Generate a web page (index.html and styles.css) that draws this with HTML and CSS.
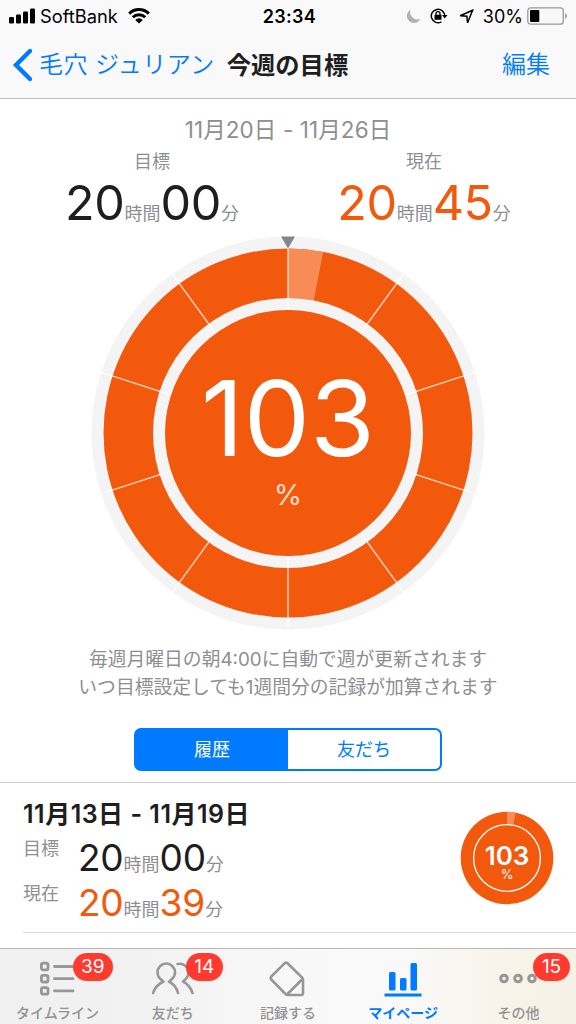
FILE: index.html
```html
<!DOCTYPE html>
<html lang="ja">
<head>
    <meta charset="UTF-8">
    <meta name="viewport" content="width=device-width, initial-scale=1.0">
    <title>今週の目標</title>
    <link rel="stylesheet" href="styles.css">
</head>
<body>
    <header class="header">
        <div class="status-bar">
            <div class="status-left">
                <svg class="signal" width="26" height="16" viewBox="0 0 26 16">
                    <rect x="0" y="9" width="5" height="6.5" rx="1.3"/>
                    <rect x="7" y="6.5" width="5" height="9" rx="1.3"/>
                    <rect x="14" y="3.5" width="5" height="12" rx="1.3"/>
                    <rect x="21" y="0.5" width="5" height="15" rx="1.3"/>
                </svg>
                <span class="carrier">SoftBank</span>
                <svg class="wifi" width="22" height="16" viewBox="0 0 22 16">
                    <path d="M1.2 5.6a14 14 0 0 1 19.6 0M4.8 9.2a8.8 8.8 0 0 1 12.4 0" fill="none" stroke="#000" stroke-width="3"/>
                    <path d="M11 15.6L7.2 11.9a5.4 5.4 0 0 1 7.6 0z"/>
                </svg>
            </div>
            <span class="clock">23:34</span>
            <div class="status-right">
                <svg class="moon" width="15" height="15" viewBox="0 0 15 15">
                    <path d="M4.6 0.8A7 7 0 1 0 14.3 9.8A7.2 7.2 0 0 1 4.6 0.8z" fill="#b2b2b2"/>
                </svg>
                <svg class="lock" width="18" height="16" viewBox="0 0 18 16">
                    <path d="M14.7 8A6.7 6.7 0 1 0 11.4 13.8" fill="none" stroke="#000" stroke-width="1.5"/>
                    <path d="M12 7h5.5l-2.8 3.4z"/>
                    <rect x="4.5" y="6.8" width="7" height="5" rx="0.6"/>
                    <path d="M6 7.4V5.6a2 2 0 0 1 4 0V7.4" fill="none" stroke="#000" stroke-width="1.3"/>
                </svg>
                <svg class="arrow" width="15" height="15" viewBox="0 0 15 15">
                    <path d="M1.2 6.8L13.6 1.2L8.6 13.8L7.9 7.3z" fill="none" stroke="#000" stroke-width="1.5"/>
                </svg>
                <span class="battery-text">30%</span>
                <svg class="battery" width="41" height="18" viewBox="0 0 41 18">
                    <rect x="0.8" y="0.8" width="35.5" height="16.4" rx="3" fill="none" stroke="#999" stroke-width="1.3"/>
                    <rect x="3" y="3" width="9.3" height="12" rx="1"/>
                    <path d="M38.2 6v6a3.4 3.4 0 0 0 0-6z" fill="#999"/>
                </svg>
            </div>
        </div>
        <nav class="nav-bar">
            <a class="back">
                <svg width="20" height="34" viewBox="0 0 20 34">
                    <path d="M18 3L4 17L18 31" fill="none" stroke="#007aff" stroke-width="4.4" stroke-linecap="round"/>
                </svg>
                <span>毛穴 ジュリアン</span>
            </a>
            <h1 class="nav-title">今週の目標</h1>
            <a class="edit">編集</a>
        </nav>
    </header>

    <main class="main">
        <p class="period">11月20日 - 11月26日</p>
        <div class="goals">
            <div class="goal">
                <p class="goal-label">目標</p>
                <p class="time"><b>20</b>時間<b>00</b>分</p>
            </div>
            <div class="goal">
                <p class="goal-label">現在</p>
                <p class="time current"><b>20</b>時間<b>45</b>分</p>
            </div>
        </div>

        <div class="chart">
            <svg width="394" height="394" viewBox="-197 -197 394 394">
                <circle r="196.5" fill="#f4f4f4"/>
                <circle r="184.5" fill="#f2590d"/>
                <path d="M0 -184.5A184.5 184.5 0 0 1 35.2 -181.1L25.7 -132.5A135 135 0 0 0 0 -135z" fill="#f78c56"/>
                <circle r="135" fill="#f4f4f4"/>
                <g class="ticks">
                    <path d="M0 -185V-123"/>
                    <path d="M0 -197V-123" transform="rotate(36)"/>
                    <path d="M0 -197V-123" transform="rotate(72)"/>
                    <path d="M0 -197V-123" transform="rotate(108)"/>
                    <path d="M0 -197V-123" transform="rotate(144)"/>
                    <path d="M0 -197V-123" transform="rotate(180)"/>
                    <path d="M0 -197V-123" transform="rotate(216)"/>
                    <path d="M0 -197V-123" transform="rotate(252)"/>
                    <path d="M0 -197V-123" transform="rotate(288)"/>
                    <path d="M0 -197V-123" transform="rotate(324)"/>
                </g>
                <circle r="123" fill="#f2590d"/>
                <path d="M-7 -196.5H7L0 -184.5z" fill="#808790"/>
                <text class="chart-value" x="0" y="22.5">103</text>
                <text class="chart-unit" x="0" y="72">%</text>
            </svg>
        </div>

        <p class="note">毎週月曜日の朝4:00に自動で週が更新されます<br>いつ目標設定しても1週間分の記録が加算されます</p>

        <div class="segment">
            <span class="segment-item active">履歴</span>
            <span class="segment-item">友だち</span>
        </div>

        <section class="history">
            <div class="record">
                <div class="record-info">
                    <h2 class="record-title">11月13日 - 11月19日</h2>
                    <div class="record-row">
                        <span class="record-label">目標</span>
                        <p class="time small"><b>20</b>時間<b>00</b>分</p>
                    </div>
                    <div class="record-row">
                        <span class="record-label">現在</span>
                        <p class="time small current"><b>20</b>時間<b>39</b>分</p>
                    </div>
                </div>
                <svg class="record-chart" width="94" height="94" viewBox="-47 -47 94 94">
                    <circle r="46.3" fill="#f2590d"/>
                    <path d="M0 -46.3A46.3 46.3 0 0 1 8.7 -45.4L6.4 -33.4H0z" fill="#f78c56"/>
                    <circle r="33.4" fill="#f2590d" stroke="#fff" stroke-width="1.4"/>
                    <text class="record-value" x="0" y="6.5">103</text>
                    <text class="record-unit" x="0" y="21">%</text>
                </svg>
            </div>
        </section>
    </main>

    <footer class="tab-bar">
        <a class="tab">
            <span class="tab-icon">
                <svg width="38" height="36" viewBox="0 0 38 36">
                    <g fill="none" stroke="#979797" stroke-width="2.8">
                        <rect x="2.4" y="2.2" width="6.6" height="6.6" rx="1.8"/>
                        <rect x="2.4" y="14.4" width="6.6" height="6.6" rx="1.8"/>
                        <rect x="2.4" y="26.6" width="6.6" height="6.6" rx="1.8"/>
                        <path d="M15.5 5.5H34M15.5 17.7H34M15.5 29.9H34" stroke-linecap="round"/>
                    </g>
                </svg>
                <span class="badge">39</span>
            </span>
            <span class="tab-label">タイムライン</span>
        </a>
        <a class="tab">
            <span class="tab-icon">
                <svg width="42" height="36" viewBox="0 0 42 36">
                    <g fill="none" stroke="#979797" stroke-width="2.6" stroke-linecap="round" stroke-linejoin="round">
                        <path d="M1 32C3 26 6 23 11.5 20.5C7 17.5 5.5 14.5 5.5 11.5C5.5 6.5 9.5 2.5 14.2 2.5S23 6.5 23 11.5C23 14.5 21.5 17.5 17 20.5C22 23 24.5 26 26 32"/>
                        <path d="M25.5 3C31.5 1.5 36.5 6.5 36.5 11.5C36.5 14.5 35 17.5 31 20.5C36 23 38.5 26 40.5 32"/>
                    </g>
                </svg>
                <span class="badge">14</span>
            </span>
            <span class="tab-label">友だち</span>
        </a>
        <a class="tab">
            <span class="tab-icon">
                <svg width="38" height="36" viewBox="0 0 38 36">
                    <path d="M15.5 2.3L2.3 15.5Q1 17 2.3 18.5L16.5 33Q17.5 34 19 34H32Q34 34 34 32V18.5Q34 17.5 33 16.5L18.5 2.3Q17 1 15.5 2.3zM33.5 18L18 33.5" fill="none" stroke="#979797" stroke-width="2.6" stroke-linejoin="round"/>
                </svg>
            </span>
            <span class="tab-label">記録する</span>
        </a>
        <a class="tab selected">
            <span class="tab-icon">
                <svg width="38" height="36" viewBox="0 0 38 36">
                    <g fill="#007aff">
                        <rect x="5" y="11" width="6.5" height="18.5" rx="1.5"/>
                        <rect x="16" y="17" width="6.5" height="12.5" rx="1.5"/>
                        <rect x="26.5" y="2" width="6.5" height="27.5" rx="1.5"/>
                        <rect x="0.5" y="32.5" width="37" height="3"/>
                    </g>
                </svg>
            </span>
            <span class="tab-label">マイページ</span>
        </a>
        <a class="tab">
            <span class="tab-icon">
                <svg width="38" height="36" viewBox="0 0 38 36">
                    <g fill="none" stroke="#979797" stroke-width="3">
                        <circle cx="5" cy="17.5" r="3.3"/>
                        <circle cx="19" cy="17.5" r="3.3"/>
                        <circle cx="33" cy="17.5" r="3.3"/>
                    </g>
                </svg>
                <span class="badge">15</span>
            </span>
            <span class="tab-label">その他</span>
        </a>
    </footer>
</body>
</html>
```
FILE: styles.css
```css
* {
    box-sizing: border-box;
}

body {
    font-family: Inter, 'Noto Sans CJK JP', sans-serif;
    margin: 0;
    width: 576px;
    height: 1024px;
    overflow: hidden;
    background: #fff;
    color: #1e1e1e;
    display: flex;
    flex-direction: column;
}

h1, h2, p {
    margin: 0;
}

svg {
    display: block;
}

.header {
    height: 99px;
    background: #f9f9f9;
    border-bottom: 1px solid #b9b9bb;
}

.status-bar {
    height: 32px;
    display: grid;
    grid-template-columns: 1fr auto 1fr;
    align-items: center;
    padding: 0 8px 0 9px;
    color: #000;
    font-size: 18px;
}

.status-left,
.status-right {
    display: flex;
    align-items: center;
}

.status-right {
    justify-content: flex-end;
}

.carrier {
    margin: 0 10px 0 5px;
    font-size: 18.3px;
}

.clock {
    padding-left: 2px;
    font-weight: 600;
    letter-spacing: 0.3px;
}

.moon {
    margin-right: 9px;
}

.lock {
    margin-right: 11px;
}

.arrow {
    margin-right: 9px;
}

.battery-text {
    margin-right: 4px;
}

.nav-bar {
    height: 66px;
    display: flex;
    align-items: center;
    padding: 0 26px 0 12px;
    font-size: 24px;
    line-height: 34px;
}

.back {
    display: flex;
    align-items: center;
    gap: 7px;
    color: #007aff;
    font-weight: 350;
    letter-spacing: 0.45px;
}

.nav-title {
    margin-left: 12px;
    font-size: 24.3px;
    font-weight: 700;
}

.edit {
    margin-left: auto;
    color: #007aff;
    font-weight: 350;
}

.main {
    flex: 1;
    display: flex;
    flex-direction: column;
    color: #8e8e93;
    font-weight: 390;
}

.period {
    margin-top: 16px;
    text-align: center;
    font-size: 22.5px;
    line-height: 30px;
    letter-spacing: 0.1px;
}

.goals {
    display: flex;
    margin-top: 5px;
}

.goal {
    width: 272px;
    padding-left: 32px;
    text-align: center;
}

.goal-label {
    font-size: 18px;
    line-height: 24px;
}

.time {
    height: 58px;
    font-size: 18px;
    line-height: 58px;
    white-space: nowrap;
}

.time b {
    color: #1e1e1e;
    font-size: 48.5px;
    font-weight: 400;
    letter-spacing: -0.4px;
}

.time.current b {
    color: #f2590d;
}

.chart {
    display: flex;
    justify-content: center;
    margin-top: 4px;
}

.ticks path {
    stroke: #fff;
    stroke-opacity: 0.7;
    stroke-width: 1.5;
}

.chart-value,
.chart-unit,
.record-value,
.record-unit {
    fill: #fff;
    text-anchor: middle;
}

.chart-value {
    font-size: 105px;
    font-weight: 400;
}

.chart-unit {
    font-size: 29px;
    font-weight: 400;
    fill-opacity: 0.8;
}

.note {
    margin-top: 16px;
    text-align: center;
    font-size: 18.8px;
    line-height: 28px;
}

.segment {
    width: 308px;
    height: 43px;
    margin: 26px auto 0;
    display: flex;
    border: 2px solid #007aff;
    border-radius: 7px;
    font-size: 18px;
    line-height: 39px;
    color: #007aff;
    text-align: center;
}

.segment-item {
    flex: 1;
}

.segment-item.active {
    background: #007aff;
    color: #fff;
}

.history {
    margin-top: 11px;
    border-top: 1px solid #d0d0d2;
    padding-left: 23px;
}

.record {
    height: 150px;
    display: flex;
    justify-content: space-between;
    padding: 14px 22px 0 0;
    border-bottom: 1px solid #d9d9db;
}

.record-title {
    color: #1e1e1e;
    font-size: 25px;
    line-height: 34px;
    font-weight: 600;
    letter-spacing: 0.5px;
}

.record-row {
    display: flex;
    height: 45px;
    font-size: 18px;
}

.record-label {
    width: 55px;
    line-height: 36px;
}

.time.small {
    line-height: 53px;
}

.time.small b {
    font-size: 37px;
    letter-spacing: -0.2px;
}

.record-chart {
    margin-top: 14px;
}

.record-value {
    font-size: 26px;
    font-weight: 600;
}

.record-unit {
    font-size: 13px;
    font-weight: 400;
}

.tab-bar {
    height: 76px;
    display: grid;
    grid-template-columns: repeat(5, 1fr);
    border-top: 1px solid #b5b5b7;
    background: linear-gradient(to right, #f0f0f0, #f2f2f2 25%, #f8f8f8 50%, #f9f9f9 70%, #f8f3e8 90%, #f6f1e6);
    color: #929292;
}

.tab {
    display: flex;
    flex-direction: column;
    align-items: center;
    padding-top: 12px;
}

.tab-icon {
    position: relative;
}

.badge {
    position: absolute;
    top: -8px;
    left: 34px;
    height: 28px;
    padding: 0 8.5px;
    border-radius: 14px;
    background: #ff3b30;
    color: #fff;
    font-size: 19px;
    line-height: 28px;
    text-align: center;
}

.tab-label {
    margin-top: 6px;
    font-size: 14px;
    line-height: 20px;
    font-weight: 500;
}

.selected {
    color: #007aff;
}

.selected .tab-label {
    font-weight: 700;
}
```
